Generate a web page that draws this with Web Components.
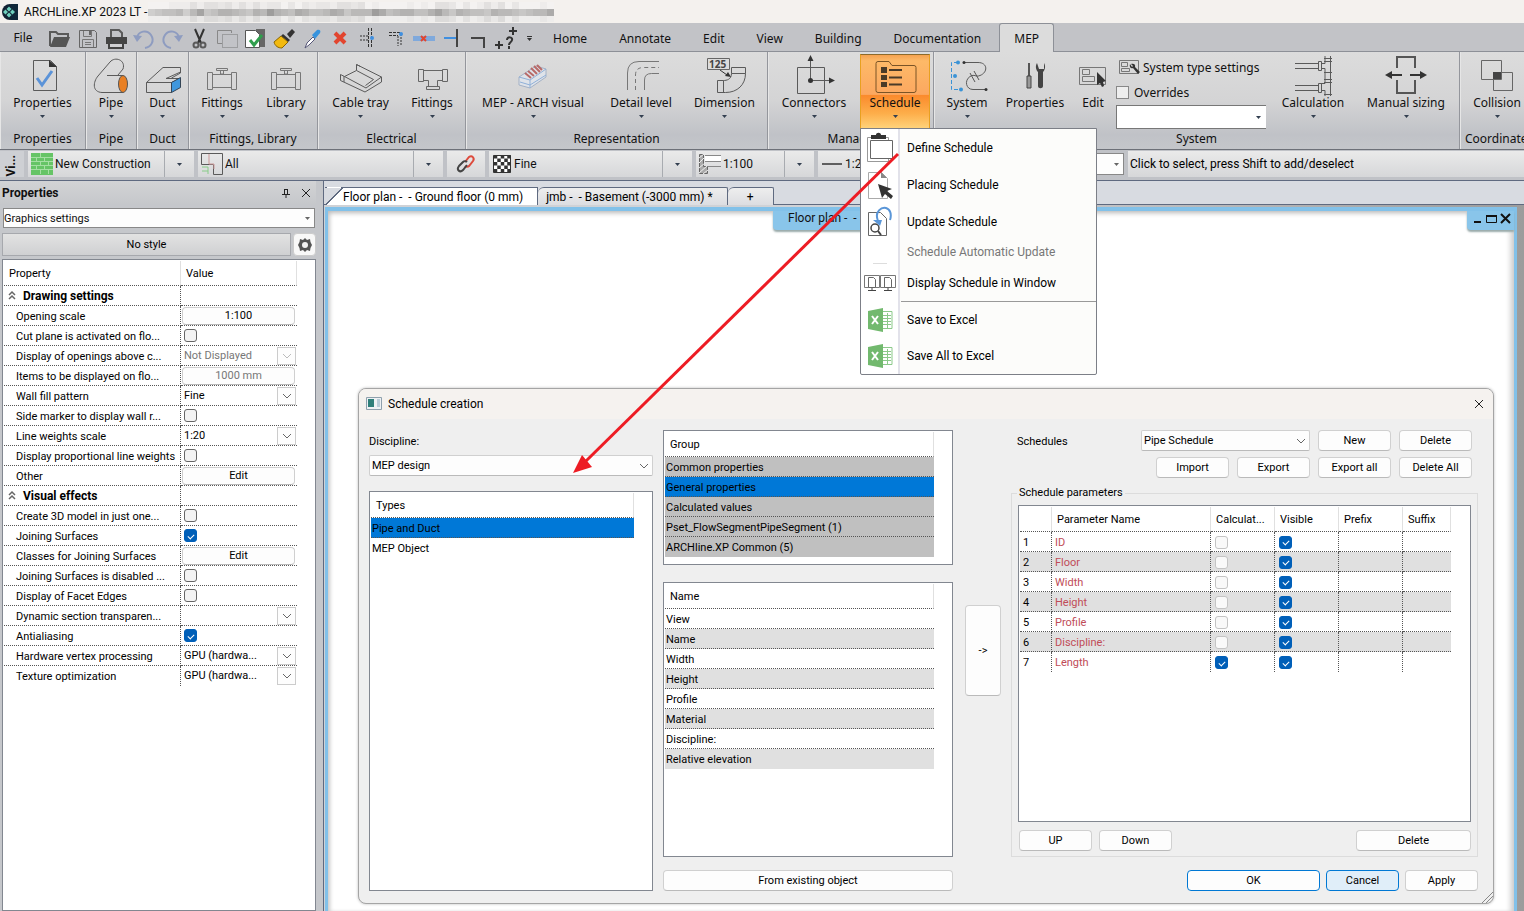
<!DOCTYPE html>
<html lang="en">
<head>
<meta charset="utf-8">
<title>ARCHLine.XP 2023 LT</title>
<style>
  html, body {
    margin: 0;
    height: 100%;
    overflow: hidden;
  }
  body {
    --line: #5f6a80;
    --face: #c5c7cb;
    --ribbon-font: "Noto Sans", "Open Sans", sans-serif;
    font: 12px/16px Roboto, "Liberation Sans", sans-serif;
    color: #111;
    background: #c5c7cb;
  }
</style>
</head>
<body>
<app-shell></app-shell>

<script>
/* Shared control styles, put in front of each component's own rules */
const controls = `
  *, *::before, *::after { box-sizing: border-box; }
  button, select, input { font: inherit; color: inherit; margin: 0; }
  .btn {
    height: 21px;
    padding: 0 4px;
    border: 1px solid #d0d0d0;
    border-bottom-color: #bababa;
    border-radius: 4px;
    background: #fdfdfd;
    color: #000;
    white-space: nowrap;
  }
  .combo { display: grid; min-width: 0; }
  .combo > * { grid-area: 1 / 1; }
  .combo select {
    appearance: none;
    width: 100%;
    height: 21px;
    padding: 0 20px 0 2px;
    border: 1px solid #d0d0d0;
    border-bottom-color: #bababa;
    border-radius: 2px;
    background: #fdfdfd;
  }
  .combo ui-icon { place-self: center end; margin-right: 4px; pointer-events: none; }
  input[type=checkbox] {
    appearance: none;
    display: grid;
    place-items: center;
    width: 13px;
    height: 13px;
    border: 1px solid #666;
    border-radius: 3px;
    background: #f3f3f3;
  }
  input[type=checkbox]:checked { background: #005fb8; border-color: #005fb8; }
  input[type=checkbox]:checked::after {
    content: "";
    width: 6px;
    height: 4px;
    border: solid #fff;
    border-width: 0 0 1px 1px;
    transform: rotate(-45deg);
  }
  input[type=checkbox]:disabled:not(:checked) { border-color: #c4c4c4; background: #f9f9f9; }
`;

const gridStyles = `
  .box {
    border: 1px solid #828790;
    background: #fff;
    padding: 1px;
    overflow: hidden;
    font-size: 11px;
  }
  table {
    border-collapse: separate;
    border-spacing: 0;
    table-layout: fixed;
    line-height: 14px;
  }
  th, td {
    padding: 2px 1px 0;
    text-align: left;
    white-space: nowrap;
    overflow: hidden;
    border-bottom: 1px dotted #555;
  }
  th {
    height: 25px;
    padding: 2px 5px 0;
    font-weight: normal;
    border-right: 1px solid #e0e0e0;
  }
  td { height: 20px; }
  tr:last-child td { border-bottom: none; }
`;

class BaseElement extends HTMLElement {
  paint(css, html) {
    this.attachShadow({ mode: "open" });
    this.shadowRoot.innerHTML = `<style>${controls}${css}</style>${html}`;
  }
}

/* ---------- icons ---------- */
const G = 'fill="none" stroke="#5a5a5a"';
const excel = `<path d="M14 3.500h10v17H14z" fill="#fff" stroke="#8cc98a"/><path d="M15 7.500h8M15 10.500h8M15 13.500h8M15 16.500h8M19.500 5v15" stroke="#8cc98a"/><path d="M0 3 15 0v24L0 21z" fill="#72b96e"/><path d="M4 8l6 8M10 8l-6 8" stroke="#fff" stroke-width="2"/>`;
const ICONS = {
  logo: [16, 16, `<circle cx="8" cy="8" r="8" fill="#123"/><path d="M9 0h7v16H9z" fill="#10283a"/><path d="M4.500 5 7 2.500l2.500 2.500L7 7.500zM1 8l2.500-2.500L6 8l-2.500 2.500zM8 8l2.500-2.500L13 8l-2.500 2.500zM4.500 11 7 8.500l2.500 2.500L7 13.500z" fill="#6fd0bd"/>`],
  open: [28, 26, `<path d="M4 20V6h6l2 2h10v3" ${G} stroke-width="2"/><path d="M4 21 8 11h16l-4 10z" fill="#555"/>`],
  save: [28, 26, `<path d="M5.500 4.500h15l2 2v15h-17z" fill="none" stroke="#666"/><path d="M9.500 5v5.500h8V5M8.500 21v-7.500h11V21M11 16.500h6M11 18.500h6" fill="none" stroke="#777"/><path d="M15 5h2v4h-2z" fill="#666"/>`],
  print: [28, 26, `<path d="M9 12V4h8l3 3v5" ${G} stroke-width="2"/><path d="M4 11h21v7H4z" fill="#444"/><path d="M7 17h14v5H7z" fill="#d0d0d3" stroke="#444" stroke-width="2"/>`],
  undo: [28, 26, `<path d="M7 12C8 5 17 3 21 9s0 12-6 13" fill="none" stroke="#8e9cc0" stroke-width="2"/><path d="M3 9l4 7 5-6z" fill="#8e9cc0"/>`],
  redo: [28, 26, `<path d="M21 12C20 5 11 3 7 9s0 12 6 13" fill="none" stroke="#8e9cc0" stroke-width="2"/><path d="M25 9l-4 7-5-6z" fill="#8e9cc0"/>`],
  cut: [28, 26, `<path d="M9 3l6 14M18 3l-6 14" stroke="#333" stroke-width="2"/><circle cx="10" cy="19" r="2.500" ${G} stroke-width="2"/><circle cx="17" cy="19" r="2.500" ${G} stroke-width="2"/>`],
  copy: [28, 26, `<path d="M8 17.500H3.500v-13h14V7" fill="none" stroke="#888"/><path d="M8.500 8.500h15v13h-15z" fill="none" stroke="#777" stroke-dasharray="1 1"/>`],
  paste: [28, 26, `<path d="M14 3h9v18h-9z" fill="#666"/><path d="M3.500 4.500h10l4 4v13h-14z" fill="#fff" stroke="#555"/><path d="M8 14l4 5 8-10" fill="none" stroke="#2f9e4d" stroke-width="3"/>`],
  brush: [28, 26, `<path d="M17 8l5-5 3 3-5 6z" fill="#333"/><path d="M13 8l7 6-2 2-7-6z" fill="#333"/><path d="M11 10l7 6-6 6c-4 0-7-2-8-6z" fill="#f2b90f" stroke="#8a6500"/>`],
  dropper: [28, 26, `<path d="M7 22l2-5 6-6 2 2-6 6z" fill="#fff" stroke="#557"/><path d="M14 9l5-5c3-1 4 1 3 3l-5 6z" fill="#3793dd"/>`],
  cross: [28, 26, `<path d="M9 7l10 10M19 7 9 17" stroke="#e2452f" stroke-width="4"/>`],
  trim: [28, 26, `<path d="M6 10h9M6 14h9" stroke="#333" stroke-dasharray="2 1"/><path d="M14.500 2v20M17.500 2v20" stroke="#333" stroke-dasharray="3 1"/><circle cx="18" cy="12" r="2" fill="#3f8fe0"/>`],
  corner: [28, 26, `<path d="M7 6.500h12M7 9.500h9" stroke="#333" stroke-dasharray="3 1"/><path d="M16 10v10M19 8v12" stroke="#333" stroke-dasharray="2 1"/><circle cx="19" cy="8" r="2" fill="#3f8fe0"/>`],
  gap: [28, 26, `<path d="M3 10h22v5H3z" fill="#7fa9dc"/><path d="M11 10l5 5M16 10l-5 5" stroke="#e2452f" stroke-width="2"/>`],
  extend: [28, 26, `<path d="M6 12h13" stroke="#3f8fe0" stroke-width="2"/><path d="M19 3v18" stroke="#444" stroke-width="2"/>`],
  angle: [28, 26, `<path d="M5 12h13v10" fill="none" stroke="#444" stroke-width="2"/>`],
  query: [28, 26, `<path d="M15 5h8M19 1v8M1 19h8M5 15v8" stroke="#333" stroke-width="2"/><path d="M13 14c0-4 6-3 5 0 0 2-3 2-3 5M15 20v3" fill="none" stroke="#333" stroke-width="2"/>`],
  more: [8, 8, `<path d="M1 1.500h5" stroke="#333"/><path d="M1 3h5L3.500 6z" fill="#333"/>`],
  arrow: [7, 5, `<path d="M1 1h5L3.500 4z" fill="#333f50"/>`],
  small: [7, 5, `<path d="M1 1h5L3.500 4z" fill="#666"/>`],
  chevron: [10, 6, `<path d="M1 1l4 4 4-4" fill="none" stroke="#666"/>`],
  faint: [10, 6, `<path d="M1 1l4 4 4-4" fill="none" stroke="#bbb"/>`],

  sheet: [44, 40, `<path d="M12.500 5.500h17l6 6v24h-23z" ${G}/><path d="M28 5v7h8z" fill="#333"/><path d="M16 23l5 7 10-14" fill="none" stroke="#5b93d8" stroke-width="3"/>`],
  pipe: [44, 40, `<path d="M34 20.500H18M34 37.500H13C3 37 4 27 9 21L21 7C26 1 37 5 34 14l-5 6" ${G}/><ellipse cx="34" cy="29" rx="4.500" ry="8.500" fill="#e98024" stroke="#555"/>`],
  duct: [44, 40, `<path d="M5.500 27.500 22 12.500h17.500V17L25 23.500h14.500L30.500 27.500zM5.500 27.500v10h25v-10M39.500 13v5l-9 5" ${G}/><path d="M30.500 27.500l9-5v10l-9 5z" fill="#3f97dd" stroke="#345"/>`],
  valve: [44, 40, `<path d="M7.500 17.500h5v17h-5zM12.500 19.500h19v13h-19zM31.500 17.500h5v17h-5zM16.500 13.500h11v2h-11zM20.500 15v4h3v-4" fill="none" stroke="#777"/>`],
  tray: [44, 40, `<path d="M1.500 19.500v6L26 37l16.500-10v-5L17.500 9.500v6M1.500 19.500l4 2L27 33l15.500-11M17.500 9.500l4 2M5.500 21.500l12-6 17 9-8 6M5 27l0-6" ${G}/>`],
  tee: [44, 40, `<path d="M8.500 14.500h5v12h-5zM32.500 14.500h5v12h-5zM13.500 15.500h19M13.500 25.500h5v6M32.500 25.500h-5v6M16.500 31.500h13v3h-13z" fill="none" stroke="#666"/>`],
  coil: [44, 40, `<path d="M8 22l17-11 10 3v8L19 33 8 30z" fill="#dfe3e9" stroke="#a3b1c6"/><path d="M8 22l11 3 16-11M19 25v8M9 27l10 3 16-10" fill="none" stroke="#8fb0d8"/><path d="M14 18l6 5M17 16l6 5M20 13l6 6M23 11l6 6M26 10l5 5" stroke="#b86a68" stroke-width="2"/>`],
  elbow: [44, 40, `<path d="M8.500 35V18Q8.500 6.500 20 6.500h20M25.500 35V25q0-6.500 7-6.500H40" fill="none" stroke="#777"/><path d="M16.500 35V20q0-7.500 8-7.500H40" fill="none" stroke="#777" stroke-dasharray="4 3"/>`],
  dimension: [44, 40, `<path d="M4.500 3.500h22v11h-22z" fill="#dcdcdc" stroke="#666"/><text x="6" y="13" font-family="Noto Sans" font-size="10" font-weight="700" fill="#444">125</text><path d="M28.500 12.500h14v6h-14zM28.500 18.500c0 6-5 7-8 7h-6v12h8c12 0 20-8 20-19M20.500 25.500v12" ${G}/><path d="M17 15l7 5" stroke="#333"/><path d="M28 22l-6-1 3-4z" fill="#333"/>`],
  connector: [44, 40, `<path d="M5.500 12.500h27v26h-27zM18.500 25V5M19 25.500h20" ${G}/><circle cx="18.500" cy="25.500" r="2.500" fill="#333"/><path d="M15.500 6l3-6 3 6zM37 22.500l6 3-6 3z" fill="#333"/>`],
  schedule: [44, 40, `<path d="M5 6.500h11l3 4h22q2 0 2 2v23q0 2-2 2H5q-2 0-2-2V8.500q0-2 2-2z" fill="none" stroke="#7a5426"/><path d="M8 12h6v6H8zM8 20h6v5H8zM8 27h6v5H8z" fill="#4a3b28"/><path d="M16 15h13M16 22.500h13M16 29.500h13" stroke="#4a3b28" stroke-width="2"/>`],
  system: [44, 40, `<path d="M13 7.500H6.500v27H16" fill="none" stroke="#3b93d6" stroke-dasharray="4 2"/><path d="M19 7.500h14c10 0 10 10 2 13-5 2-5-2-10 1-6 4-4 13 3 13h13" ${G}/><path d="M25 18l5 9M29 16l5 9" stroke="#555"/><g fill="#3b93d6"><circle cx="13" cy="7.500" r="2"/><circle cx="10" cy="21" r="2"/><circle cx="16" cy="34.500" r="2"/></g><circle cx="19" cy="7.500" r="1.500" fill="#333"/><circle cx="41" cy="34.500" r="1.500" fill="#333"/>`],
  tools: [44, 40, `<path d="M16 8v13" stroke="#555" stroke-width="2"/><path d="M14 21h4v12h-4z" fill="#999" stroke="#444"/><path d="M24 8c-2 3-1 7 1 9v14c0 3 5 3 5 0V17c2-2 3-6 1-9v6h-2l-3 0z" fill="#444"/>`],
  pick: [44, 40, `<path d="M8.500 12.500h26v17h-26zM11.500 14.500h7v5h-7zM11.500 21.500h12v5h-12z" fill="none" stroke="#777"/><path d="M26 17v13l3-2 2 4 2-1-1-4 3-1z" fill="#333"/>`],
  settings: [22, 18, `<path d="M1.500 1.500h19v13h-19zM3.500 3.500h6v4h-6zM3.500 9.500h8v3h-8z" fill="none" stroke="#777"/><path d="M12 5c-1 3 1 5 3 4l5 6 2-2-5-5c1-3-2-4-4-3l2 2-1 1z" fill="#333"/>`],
  manifold: [44, 42, `<path d="M4 8.500h23M4 13.500h23M4 30.500h23M4 35.500h23M27.500 6.500h3v9h-3zM27.500 28.500h3v9h-3zM30 8.500h4V1M30 13.500h4v15h-4M30 35.500h4V41M39.500 1v40M33 3.500h8M33 6.500h8M33 17.500h8M33 24.500h8M33 27.500h8M33 39.500h8" ${G}/>`],
  sizing: [44, 42, `<path d="M13 13V2h18v11M13 25v13h18V25" fill="none" stroke="#555" stroke-width="2"/><path d="M18 20H6M26 20h12" stroke="#333" stroke-width="2"/><path d="M1 20l7-4v8zM43 20l-7-4v8z" fill="#333"/>`],
  clash: [44, 40, `<path d="M6.500 5.500h20v19h-20zM18.500 17.500h19v18h-19z" fill="none" stroke="#666"/><path d="M18 17h8v7h-8z" fill="#444"/>`],

  brick: [22, 22, `<path d="M0 0h22v22H0z" fill="#66c466"/><path d="M0 4.500h22M0 8.500h22M0 12.500h22M0 16.500h22M5.500 4v4M13.500 4v4M9.500 8v4M17.500 8v4M5.500 12v4M13.500 12v4M9.500 0v4M9.500 16v5M17.500 16v5" stroke="#a5dfa3"/>`],
  plan: [22, 22, `<path d="M.5.5h21v21h-9v-10H.5z" ${G}/><path d="M8 1v10h5v5" fill="none" stroke="#c99"/><path d="M1 14h6v7M1 18h6" fill="none" stroke="#8c8"/>`],
  link: [20, 20, `<g fill="none" stroke-width="2"><path d="M9 8l4-5c3-2 6 1 4 4l-4 5c-1 1-3 1-4 0" stroke="#dd4a3c"/><path d="M11 11l-4 5c-3 3-7 0-4-4l4-4c1-1 3-1 4 0" stroke="#444"/></g>`],
  checker: [20, 20, `<path d="M1.500 1.500h17v17h-17z" fill="#fff" stroke="#333"/><path d="M3.500 1v18M10.500 1v18M17 1v18" stroke="#333" stroke-width="3.500" stroke-dasharray="3.500 3.500"/><path d="M7 4.500V19M14 4.500V19" stroke="#333" stroke-width="3.500" stroke-dasharray="3.500 3.500"/>`],
  wall: [22, 22, `<path d="M.5 1.500h4v12h4v7h-8z" fill="#aaa" stroke="#666"/><path d="M6 2.500h16M6 8.500h16M9 13.500h13" stroke="#888"/><path d="M6 3h16v5H6z" fill="#fff"/><path d="M0 5l5-4M0 10l5-5M0 15l6-5M0 20l8-7M4 21l5-4" stroke="#eee"/>`],
  dash: [22, 20, `<path d="M1 10h20" stroke="#333" stroke-width="1.500"/>`],

  pin: [10, 10, `<path d="M3.500 1v5M6.500 1v5M3 1.500h4M1 6.500h8M5 6v4" stroke="#222"/>`],
  close: [10, 10, `<path d="M1 1l8 8M9 1 1 9" stroke="#222"/>`],
  gear: [16, 16, `<path d="M8 1l2 2 3-1 .5 3L15 8l-1.500 3-.5 3-3-1-2 2-2-2-3 1-.5-3L1 8l1.500-3L3 2l3 1z" fill="#555"/><circle cx="8" cy="8" r="4" fill="#555"/><circle cx="8" cy="8" r="3" fill="#f3f3f3"/>`],
  fold: [8, 10, `<path d="M1 5l3-3 3 3M1 9l3-3 3 3" fill="none" stroke="#666" stroke-width="1.500"/>`],
  win: [40, 12, `<path d="M1 9h7" stroke="#111" stroke-width="2"/><path d="M13.500 2.500h10v7h-10z" fill="none" stroke="#111"/><path d="M13 3h11" stroke="#111" stroke-width="2"/><path d="M28 1l9 9M37 1l-9 9" stroke="#111" stroke-width="2"/>`],
  form: [16, 14, `<path d="M.5.5h15v12H.5z" fill="#eef1f4" stroke="#8fa0ad"/><path d="M2 2h6v8H2z" fill="#2f7f7a"/><path d="M11 2h3v8h-3z" fill="#b9ccd8"/>`],
  grip: [12, 12, `<path d="M1 12 12 1M5 12l7-7M9 12l3-3" stroke="#888"/>`],

  clipboard: [28, 32, `<path d="M1.500 5.500h21v24h-21z" fill="#fff" stroke="#999"/><path d="M4.500 8.500h22v18h-22z" fill="#fff" stroke="#666"/><path d="M5 7V3h5c0-3 5-3 5 0h5v4z" fill="#333"/>`],
  place: [28, 30, `<path d="M2.500 2.500h13l6 6v20h-19z" fill="#fff" stroke="#aaa"/><path d="M15 2v6h6z" fill="#888"/><path d="M12 14l4 14 3-4 6 5 2-3-6-5 5-2z" fill="#333"/>`],
  update: [28, 32, `<path d="M2.500 6.500h12l6 6v17h-18z" fill="#fff" stroke="#666"/><circle cx="9" cy="22" r="4" fill="#fff" stroke="#444" stroke-width="1.500"/><path d="M12 25l3 4" stroke="#444" stroke-width="2"/><path d="M12 15C8 5 16 1 20 2s6 6 4 12" fill="none" stroke="#5a96d8" stroke-width="2"/><path d="M7 14h9l-2 6z" fill="#5a96d8"/>`],
  screens: [32, 18, `<path d="M.5 1.500h15v12H.5zM16.500 1.500h15v12h-15z" fill="#fff" stroke="#777"/><path d="M4.500 3.500h5l2 2v8h-7zM20.500 3.500h5l2 2v8h-7z" fill="#fff" stroke="#666"/><path d="M4 16.500h8M20 16.500h8M8 14v2M24 14v2" stroke="#444"/>`],
  rule: [14, 24, `<path d="M0 23.500h14" stroke="#ddd"/>`],
  excel: [25, 24, excel],
};

class UiIcon extends BaseElement {
  connectedCallback() {
    if (this.shadowRoot) return;
    const [w, h, body] = ICONS[this.getAttribute("name")];
    this.paint(`:host { display: inline-flex; flex: none; }`,
      `<svg width="${w}" height="${h}" viewBox="0 0 ${w} ${h}" aria-hidden="true">${body}</svg>`);
  }
}
customElements.define("ui-icon", UiIcon);

/* ---------- title bar ---------- */
class TitleBar extends BaseElement {
  constructor() {
    super();
    // censored project path: three rows of grey tiles
    const shades = "4566747a568876587b87698667985777b96788668a7587665877656779";
    let tiles = "";
    [...shades].forEach((c, i) => {
      const v = parseInt(c, 16);
      const mid = 235 - v * 7;
      const edge = 244 - ((v * 7 + i * 5) % 4) * 6;
      tiles += `<path d="M${i * 7} 0h7v7h-7z" fill="rgb(${edge},${edge - 2},${edge - 3})"/>`;
      tiles += `<path d="M${i * 7} 7h7v7h-7z" fill="rgb(${mid},${mid - 1},${mid - 2})"/>`;
      tiles += `<path d="M${i * 7} 14h7v6h-7z" fill="rgb(${edge - 6},${edge - 7},${edge - 8})"/>`;
    });
    this.paint(`
      :host {
        display: flex;
        align-items: center;
        height: 23px;
        padding-left: 2px;
        background: #f4f1ee;
      }
      span { padding: 0 1px 0 6px; }
      `, `
      <ui-icon name="logo"></ui-icon>
      <span>ARCHLine.XP 2023 LT -</span>
      <svg width="406" height="20" shape-rendering="crispEdges">${tiles}</svg>
    `);
  }
}
customElements.define("title-bar", TitleBar);

/* ---------- ribbon ---------- */
class RibbonButton extends BaseElement {
  connectedCallback() {
    if (this.shadowRoot) return;
    const arrow = this.hasAttribute("plain") ? "" : `<ui-icon name="arrow"></ui-icon>`;
    this.paint(`
      :host { display: block; position: relative; }
      button {
        display: flex;
        flex-direction: column;
        align-items: center;
        width: 100%;
        height: 75px;
        padding: 0;
        border: 1px solid transparent;
        background: none;
        white-space: nowrap;
      }
      .pic { height: 40px; }
      .txt { line-height: 16px; margin-bottom: 3px; }
      :host([active]) button {
        border-color: #8c6a2c #e8a020 #ffb21c;
        background: linear-gradient(#f5a250, #fdb968 8%, #fca860 54%, #fb8a2c 55%, #fdae4a 80%, #ffd27a);
      }
      `, `
      <button>
        <ui-icon class="pic" name="${this.getAttribute("icon")}"></ui-icon>
        <span class="txt"><slot></slot></span>
        ${arrow}
      </button>
      <slot name="menu"></slot>
    `);
  }
}
customElements.define("ribbon-button", RibbonButton);

class RibbonGroup extends BaseElement {
  connectedCallback() {
    if (this.shadowRoot) return;
    this.paint(`
      :host {
        display: flex;
        flex-direction: column;
        flex: none;
        height: 97px;
        padding-top: 2px;
        border-right: 1px solid #94969c;
        box-shadow: inset 1px 0 #e6e6e6;
      }
      .row { display: flex; flex: none; height: 77px; }
      .name { text-align: center; line-height: 16px; white-space: nowrap; }
      :host([end]) .name { text-align: left; padding-left: 5px; }
      `, `
      <div class="row"><slot></slot></div>
      <div class="name">${this.getAttribute("label")}</div>
    `);
  }
}
customElements.define("ribbon-group", RibbonGroup);

class ScheduleMenu extends BaseElement {
  constructor() {
    super();
    const item = (icon, text, cls = "") =>
      `<button role="menuitem" class="${cls}"><span class="ico"><ui-icon name="${icon}"></ui-icon></span><span>${text}</span></button>`;
    this.paint(`
      :host {
        position: absolute;
        z-index: 5;
        top: calc(100% - 3px);
        left: 0;
        display: block;
        width: 237px;
        border: 1px solid #7c7f87;
        border-radius: 0 0 2px 2px;
        background: linear-gradient(90deg, #fff 37px, #e2e2ea 37px 39px, #fcfcfa 39px);
        font-family: Roboto, sans-serif;
      }
      button {
        display: flex;
        align-items: center;
        gap: 8px;
        width: 100%;
        height: 37px;
        padding: 0;
        border: none;
        background: none;
        color: #000;
        text-align: left;
      }
      .ico { display: flex; justify-content: center; width: 38px; }
      .low { height: 24px; color: #777; }
      .xls { height: 36px; }
      hr { margin: 0 0 0 40px; border: none; border-top: 1px solid #999; }
      `, `
      ${item("clipboard", "Define Schedule")}
      ${item("place", "Placing Schedule")}
      ${item("update", "Update Schedule")}
      ${item("rule", "Schedule Automatic Update", "low")}
      ${item("screens", "Display Schedule in Window")}
      <hr>
      ${item("excel", "Save to Excel", "xls")}
      ${item("excel", "Save All to Excel", "xls")}
    `);
  }
}

class RibbonBar extends BaseElement {
  constructor() {
    super();
    const quick = ["open", "save", "print", "undo", "redo", "cut", "copy", "paste", "brush",
      "dropper", "cross", "trim", "corner", "gap", "extend", "angle", "query"];
    const tabs = ["Home", "Annotate", "Edit", "View", "Building", "Documentation"];
    const btn = (w, icon, text, extra = "", inner = "") =>
      `<ribbon-button style="width:${w}px" icon="${icon}" ${extra}>${text}${inner}</ribbon-button>`;
    this.paint(`
      :host { display: block; font-family: var(--ribbon-font); }
      .top {
        display: flex;
        height: 29px;
        background: #c2c3c7;
        border-bottom: 1px solid #8d9097;
      }
      .top button { border: none; background: none; padding: 0; }
      .top .file { width: 46px; padding-top: 2px; }
      .quick { display: flex; align-items: center; padding-top: 3px; }
      .quick button { display: flex; justify-content: center; }
      .quick .more { width: 15px; }
      .tabs { display: flex; }
      .top .tab { height: 29px; padding: 2px 16px 0; }
      .top .tab.on {
        padding: 2px 14px 0;
        margin-left: 2px;
        border: 1px solid #8d9097;
        border-bottom: none;
        border-radius: 3px 3px 0 0;
        background: #dcdcdc;
      }
      .groups {
        display: flex;
        height: 98px;
        border-bottom: 1px solid #6d7078;
        background: linear-gradient(#dcdcdc, #d4d4d5 50%, #c0c2c7 85%, #c4c6ca);
      }
      .stack { display: flex; flex-direction: column; width: 150px; height: 75px; }
      .stack label, .stack .link { display: flex; align-items: center; gap: 5px; }
      .stack .link { height: 26px; padding: 2px 0 0 2px; border: none; background: none; gap: 3px; white-space: nowrap; }
      .stack label { height: 25px; }
      .stack input { border-radius: 0; border-color: #888; background: #eee; }
      .stack .combo select { height: 24px; border: 1px solid #777; border-right: none; border-radius: 0; background: #fff; }
      `, `
      <div class="top">
        <button class="file">File</button>
        <div class="quick">
          ${quick.map((n) => `<button aria-label="${n}"><ui-icon name="${n}"></ui-icon></button>`).join("")}
          <button class="more" aria-label="more"><ui-icon name="more"></ui-icon></button>
        </div>
        <div class="tabs">
          ${tabs.map((t) => `<button class="tab">${t}</button>`).join("")}
          <button class="tab on">MEP</button>
        </div>
      </div>
      <div class="groups">
        <ribbon-group label="Properties">${btn(85, "sheet", "Properties")}</ribbon-group>
        <ribbon-group label="Pipe">${btn(50, "pipe", "Pipe")}</ribbon-group>
        <ribbon-group label="Duct">${btn(51, "duct", "Duct")}</ribbon-group>
        <ribbon-group label="Fittings, Library">${btn(66, "valve", "Fittings")}${btn(62, "valve", "Library")}</ribbon-group>
        <ribbon-group label="Electrical">${btn(85, "tray", "Cable tray")}${btn(58, "tee", "Fittings")}<span style="width:4px"></span></ribbon-group>
        <ribbon-group label="Representation">${btn(134, "coil", "MEP - ARCH visual")}${btn(82, "elbow", "Detail level")}${btn(85, "dimension", "Dimension")}</ribbon-group>
        <ribbon-group label="Manage">${btn(92, "connector", "Connectors")}${btn(70, "schedule", "Schedule", "active",
          `<schedule-menu slot="menu"></schedule-menu>`)}<span style="width:3px"></span></ribbon-group>
        <ribbon-group label="System">
          ${btn(66, "system", "System")}${btn(70, "tools", "Properties", "plain")}${btn(46, "pick", "Edit", "plain")}
          <div class="stack">
            <button class="link"><ui-icon name="settings"></ui-icon>System type settings</button>
            <label><input type="checkbox">Overrides</label>
            <span class="combo"><select aria-label="System"><option></option></select><ui-icon name="arrow"></ui-icon></span>
          </div>
          ${btn(94, "manifold", "Calculation")}${btn(92, "sizing", "Manual sizing")}<span style="width:7px"></span>
        </ribbon-group>
        <ribbon-group label="Coordinate" end>${btn(74, "clash", "Collision")}</ribbon-group>
      </div>
    `);
  }
}
customElements.define("schedule-menu", ScheduleMenu);
customElements.define("ribbon-bar", RibbonBar);

/* ---------- option bar under the ribbon ---------- */
class OptionBar extends BaseElement {
  constructor() {
    super();
    const combo = (w, icon, text) => `
      <span class="pick" style="width:${w}px">
        <ui-icon name="${icon}"></ui-icon>
        <select aria-label="${icon}"><option>${text}</option></select>
        <span class="drop"><ui-icon name="arrow"></ui-icon></span>
      </span>`;
    this.paint(`
      :host {
        display: flex;
        gap: 4px;
        height: 31px;
        padding: 1px 0 3px;
        background: #c0c2c7;
        border-bottom: 1px solid var(--line);
      }
      .handle {
        width: 24px;
        padding: 4px 0 0 4px;
        background: #ced0d4;
        font-weight: bold;
      }
      .handle span { writing-mode: vertical-rl; transform: rotate(180deg); line-height: 14px; }
      .pick, .link, .status {
        display: flex;
        align-items: center;
        flex: none;
        border: none;
        background: linear-gradient(#eaeaea, #d6d7d9);
      }
      .pick { padding-left: 3px; }
      .pick select { appearance: none; flex: 1; min-width: 0; border: none; background: none; padding: 0 2px; }
      .drop {
        display: flex;
        align-items: center;
        justify-content: center;
        width: 30px;
        height: 100%;
        border-left: 1px solid #a8abb0;
      }
      .link { width: 38px; justify-content: center; padding: 0; }
      .combo { width: 126px; align-self: center; }
      .combo select { height: 22px; border: 1px solid #888; border-radius: 0; }
      .status { flex: 1; padding-left: 2px; white-space: nowrap; color: #000; }
      `, `
      <div class="handle"><span>Vi...</span></div>
      ${combo(166, "brick", "New Construction")}
      ${combo(245, "plan", "All")}
      <button class="link" aria-label="Link"><ui-icon name="link"></ui-icon></button>
      ${combo(203, "checker", "Fine")}
      ${combo(118, "wall", "1:100")}
      ${combo(176, "dash", "1:20")}
      <span class="combo"><select aria-label="Filter"><option></option></select><ui-icon name="small"></ui-icon></span>
      <div class="status">Click to select, press Shift to add/deselect</div>
    `);
  }
}
customElements.define("option-bar", OptionBar);

/* ---------- properties panel ---------- */
class PropertiesPanel extends BaseElement {
  constructor() {
    super();
    const rows = [
      ["Drawing settings"],
      ["Opening scale", "button", "1:100"],
      ["Cut plane is activated on flo...", "check", false],
      ["Display of openings above c...", "select", "Not Displayed", true],
      ["Items to be displayed on flo...", "button", "1000 mm", true],
      ["Wall fill pattern", "select", "Fine"],
      ["Side marker to display wall r...", "check", false],
      ["Line weights scale", "select", "1:20"],
      ["Display proportional line weights", "check", false],
      ["Other", "button", "Edit"],
      ["Visual effects"],
      ["Create 3D model in just one...", "check", false],
      ["Joining Surfaces", "check", true],
      ["Classes for Joining Surfaces", "button", "Edit"],
      ["Joining Surfaces is disabled ...", "check", false],
      ["Display of Facet Edges", "check", false],
      ["Dynamic section transparen...", "select", ""],
      ["Antialiasing", "check", true],
      ["Hardware vertex processing", "select", "GPU (hardwa..."],
      ["Texture optimization", "select", "GPU (hardwa..."],
    ];
    this.paint(`${gridStyles}
      :host {
        display: flex;
        flex-direction: column;
        flex: none;
        width: 316px;
        font-size: 11px;
        background: var(--face);
      }
      header {
        display: flex;
        align-items: center;
        gap: 10px;
        height: 23px;
        padding: 0 5px 0 2px;
        font-size: 12px;
        background: linear-gradient(#d2d3d5, #c6c8cb);
      }
      header b { flex: 1; }
      header button, .gear { display: flex; padding: 0; border: none; background: none; }
      .kind { margin: 4px 1px 5px 3px; }
      .kind select { height: 20px; padding: 1px 20px 0 0; border: 1px solid #888; border-radius: 0; }
      .style { display: flex; gap: 2px; margin: 0 0 3px 2px; }
      .style .wide {
        flex: 1;
        height: 23px;
        border: 1px solid #a6a8ad;
        background: linear-gradient(#e2e2e2, #cfd0d2);
        color: #000;
      }
      .gear {
        width: 23px;
        height: 23px;
        align-items: center;
        justify-content: center;
        border: 1px solid #ccc;
        border-radius: 4px;
        background: #f8f8f8;
      }
      .box { flex: 1; margin-left: 2px; }
      table { width: 293px; color: #000; }
      th:first-child { width: 177px; }
      td:first-child { padding-left: 12px; border-right: 1px dotted #555; }
      td.group { padding: 0 0 0 4px; font-weight: bold; font-size: 12px; }
      td.group ui-icon { margin-right: 7px; }
      td:last-child { padding: 0 1px; }
      td input { margin-left: 2px !important; }
      td .btn { display: block; width: 113px; height: 18px; }
      td .combo select { height: 18px; border: none; background: none; opacity: 1; }
      td .combo ui-icon {
        width: 19px;
        height: 18px;
        margin: 0;
        align-items: center;
        justify-content: center;
        border: 1px solid #ccc;
        background: #fdfdfd;
      }
      .off { color: #777; }
      tr:last-child td:first-child { border-bottom: none; }
      `, `
      <header><b>Properties</b>
        <button aria-label="Pin"><ui-icon name="pin"></ui-icon></button>
        <button aria-label="Close"><ui-icon name="close"></ui-icon></button>
      </header>
      <span class="combo kind"><select aria-label="Settings"><option>Graphics settings</option></select><ui-icon name="small"></ui-icon></span>
      <div class="style"><button class="wide">No style</button><button class="gear" aria-label="Style settings"><ui-icon name="gear"></ui-icon></button></div>
      <div class="box">
        <table>
          <thead><tr><th>Property</th><th>Value</th></tr></thead>
          <tbody>${rows.map((r) => this.row(...r)).join("")}</tbody>
        </table>
      </div>
    `);
  }

  row(name, type, value, off) {
    if (!type) return `<tr><td class="group"><ui-icon name="fold"></ui-icon>${name}</td><td></td></tr>`;
    const cls = off ? "off" : "";
    let field;
    if (type === "button") field = `<button class="btn ${cls}">${value}</button>`;
    if (type === "check") field = `<input type="checkbox" aria-label="${name}" ${value ? "checked" : ""}>`;
    if (type === "select") field = `<span class="combo"><select class="${cls}" aria-label="${name}"><option>${value}</option></select><ui-icon name="${off ? "faint" : "chevron"}"></ui-icon></span>`;
    return `<tr><td>${name}</td><td>${field}</td></tr>`;
  }
}
customElements.define("properties-panel", PropertiesPanel);

/* ---------- one-column list used in the dialog ---------- */
class ListGrid extends BaseElement {
  connectedCallback() {
    if (this.shadowRoot) return;
    const items = this.getAttribute("items").split("|");
    const on = this.getAttribute("selected");
    this.paint(`${gridStyles}
      :host { display: flex; flex-direction: column; min-height: 0; }
      .box { flex: 1; }
      table { width: calc(100% - 17px); color: #000; }
      :host([striped]) tr:nth-child(even) td { background: #e0e0e0; }
      :host([grey]) td { background: #c0c0c0; }
      :host tbody tr.on td.cell { background: #0078d7; }
      `, `
      <div class="box">
        <table>
          <thead><tr><th>${this.getAttribute("head")}</th></tr></thead>
          <tbody>${items.map((t) => `<tr class="${t === on ? "on" : ""}"><td class="cell">${t}</td></tr>`).join("")}</tbody>
        </table>
      </div>
    `);
  }
}
customElements.define("list-grid", ListGrid);

/* ---------- schedule dialog ---------- */
class ScheduleDialog extends BaseElement {
  constructor() {
    super();
    const params = ["ID", "Floor", "Width", "Height", "Profile", "Discipline:", "Length"];
    const row = (name, i) => `
      <tr>
        <td>${i + 1}</td>
        <td class="name">${name}</td>
        <td><input type="checkbox" aria-label="${name} calculated" ${name === "Length" ? "checked" : "disabled"}></td>
        <td><input type="checkbox" aria-label="${name} visible" checked></td>
        <td></td><td></td>
      </tr>`;
    this.paint(`${gridStyles}
      :host {
        display: flex;
        flex-direction: column;
        border: 1px solid #a5a5a5;
        border-radius: 8px;
        background: #efefef;
        box-shadow: 0 0 3px #0004;
        font-size: 11px;
        line-height: 14px;
        color: #000;
        overflow: hidden;
      }
      header {
        display: flex;
        align-items: center;
        gap: 6px;
        height: 30px;
        flex: none;
        padding: 0 9px 0 7px;
        font-size: 12px;
        background: #f5f2ef;
      }
      header span { flex: 1; }
      header button { display: flex; border: none; background: none; padding: 0; }
      .body { display: grid; grid-template-columns: 284px 300px 48px 1fr; flex: 1; min-height: 0; padding: 11px 15px 12px 10px; }
      .body > div { display: flex; flex-direction: column; min-height: 0; }
      .left label { height: 25px; padding-top: 5px; }
      .left list-grid { flex: 1; margin-top: 15px; }
      .mid { padding-left: 10px; }
      .mid list-grid:first-child { height: 135px; margin-bottom: 17px; }
      .mid list-grid:nth-child(2) { height: 275px; }
      .mid .btn { margin-top: auto; }
      .move { padding-left: 12px; justify-content: center; }
      .move .btn { height: 91px; margin-top: -20px; }
      .right { padding-left: 10px; }
      .tools { display: grid; grid-template-columns: 1fr repeat(4, 73px); gap: 6px 8px; padding: 0 6px; }
      .tools label { grid-column: 1; padding-top: 5px; }
      .tools .combo { grid-column: 2 / 4; margin-left: -15px; }
      .tools .second { grid-column: 2; }
      fieldset {
        display: flex;
        flex-direction: column;
        flex: 1;
        min-height: 0;
        margin: 8px 0 13px;
        padding: 5px 6px 5px;
        border: 1px solid #dcdcdc;
      }
      legend { padding: 0 2px; margin-left: -1px; }
      fieldset .box { flex: 1; min-height: 0; }
      .params { width: calc(100% - 18px); }
      .params th:nth-child(1) { width: 32px; }
      .params th:nth-child(3), .params th:nth-child(4), .params th:nth-child(5) { width: 64px; }
      .params th:nth-child(6) { width: 48px; }
      .params td:not(:last-child) { border-right: 1px dotted #555; }
      .params td { padding-left: 4px; }
      .params td:first-child, .params td.name { padding-left: 3px; }
      .params input { margin-bottom: 1px; }
      .params tr:nth-child(even) td { background: #e0e0e0; }
      td.name { color: #c04c58; }
      .acts, .foot { display: flex; gap: 7px; }
      .acts { margin-top: 8px; padding-left: 1px; }
      .acts .btn, .foot .btn { width: 73px; }
      .acts .btn:last-child { width: 115px; margin-left: auto; }
      .foot { justify-content: flex-end; gap: 6px; }
      .foot .btn:first-child { width: 133px; border-color: #0078d4; }
      .foot .btn:nth-child(2) { border-color: #0078d4; background: #e0eef9; }
      .grip { position: absolute; right: 0; bottom: 0; }
      `, `
      <header>
        <ui-icon name="form"></ui-icon><span>Schedule creation</span>
        <button aria-label="Close"><ui-icon name="close"></ui-icon></button>
      </header>
      <div class="body">
        <div class="left">
          <label for="discipline">Discipline:</label>
          <span class="combo"><select id="discipline"><option>MEP design</option></select><ui-icon name="chevron"></ui-icon></span>
          <list-grid head="Types" items="Pipe and Duct|MEP Object" selected="Pipe and Duct"></list-grid>
        </div>
        <div class="mid">
          <list-grid grey head="Group" selected="General properties"
            items="Common properties|General properties|Calculated values|Pset_FlowSegmentPipeSegment (1)|ARCHline.XP Common (5)"></list-grid>
          <list-grid striped head="Name"
            items="View|Name|Width|Height|Profile|Material|Discipline:|Relative elevation"></list-grid>
          <button class="btn">From existing object</button>
        </div>
        <div class="move"><button class="btn">-&gt;</button></div>
        <div class="right">
          <div class="tools">
            <label for="schedules">Schedules</label>
            <span class="combo"><select id="schedules"><option>Pipe Schedule</option></select><ui-icon name="chevron"></ui-icon></span>
            <button class="btn">New</button><button class="btn">Delete</button>
            <button class="btn second">Import</button><button class="btn">Export</button>
            <button class="btn">Export all</button><button class="btn">Delete All</button>
          </div>
          <fieldset>
            <legend>Schedule parameters</legend>
            <div class="box">
              <table class="params">
                <thead><tr><th></th><th>Parameter Name</th><th>Calculat...</th><th>Visible</th><th>Prefix</th><th>Suffix</th></tr></thead>
                <tbody>${params.map(row).join("")}</tbody>
              </table>
            </div>
            <div class="acts"><button class="btn">UP</button><button class="btn">Down</button><button class="btn">Delete</button></div>
          </fieldset>
          <div class="foot"><button class="btn">OK</button><button class="btn">Cancel</button><button class="btn">Apply</button></div>
        </div>
      </div>
      <ui-icon class="grip" name="grip"></ui-icon>
    `);
  }
}
customElements.define("schedule-dialog", ScheduleDialog);

/* ---------- drawing area ---------- */
class DrawingArea extends BaseElement {
  constructor() {
    super();
    this.paint(`
      :host {
        display: flex;
        flex-direction: column;
        flex: 1;
        min-width: 0;
        margin-left: 7px;
        border-left: 1px solid var(--line);
        background: linear-gradient(90deg, #d0d2d6 50%, #9c9c9c);
      }
      .tabs {
        display: flex;
        height: 24px;
        padding: 6px 0 0 1px;
        background: #d8dbe1;
        border-bottom: 1px solid var(--line);
      }
      .tabs button {
        height: 18px;
        padding: 0 14px 0 8px;
        border: solid var(--line);
        border-width: 1px 1px 0 0;
        border-radius: 6px 2px 0 0;
        background: linear-gradient(#eee, #dcdde1);
        line-height: 16px;
        white-space: pre;
        color: #000;
      }
      .tabs button.on {
        padding: 0 14px 0 18px;
        border-radius: 0 2px 0 0;
        background: linear-gradient(135deg, transparent 12px, var(--line) 12px 13px, #fff 13px);
        border-image: linear-gradient(90deg, transparent 17px, var(--line) 17px) 1;
      }
      .tabs .add { width: 46px; padding: 0; }
      .view {
        display: grid;
        grid-template-columns: 1fr 296px 1fr;
        align-items: start;
        position: relative;
        flex: 1;
        margin: 2px 7px 0 1px;
        border: solid #82c1e9;
        border-width: 4px 3px 0;
        background: #fff;
        box-shadow: inset 0 4px 5px -2px #bbb, inset 4px 0 4px -2px #ccc, inset -6px 0 5px -2px #d4d4d4;
      }
      .cap, .win { background: #89c5ea; box-shadow: 0 2px 2px #9aa; height: 19px; }
      .cap { grid-column: 2; padding-left: 15px; line-height: 15px; border-radius: 0 0 4px 4px; white-space: pre; }
      .win { display: flex; justify-self: end; padding: 2px 1px 0 6px; border: none; border-radius: 0 0 0 4px; }
      schedule-dialog { position: absolute; left: 30px; right: 20px; top: 177px; bottom: 7px; }
      `, `
      <div class="tabs">
        <button class="on">Floor plan -  - Ground floor (0 mm)</button>
        <button>jmb -  - Basement (-3000 mm) *</button>
        <button class="add">+</button>
      </div>
      <div class="view">
        <div class="cap">Floor plan -  -</div>
        <button class="win" aria-label="Window"><ui-icon name="win"></ui-icon></button>
        <schedule-dialog></schedule-dialog>
      </div>
    `);
  }
}
customElements.define("drawing-area", DrawingArea);

class AppShell extends BaseElement {
  constructor() {
    super();
    this.paint(`
      :host { display: flex; flex-direction: column; height: 100vh; position: relative; }
      ribbon-bar { position: relative; z-index: 2; }
      main { display: flex; flex: 1; min-height: 0; }
      .note { position: absolute; z-index: 3; left: 0; top: 0; pointer-events: none; }
      `, `
      <title-bar></title-bar>
      <ribbon-bar></ribbon-bar>
      <option-bar></option-bar>
      <main>
        <properties-panel></properties-panel>
        <drawing-area></drawing-area>
      </main>
      <svg class="note" width="1000" height="500" aria-hidden="true">
        <path d="M898 154 586 461" stroke="#ed1c24" stroke-width="3"/>
        <path d="M573 473l9-18 10 12z" fill="#ed1c24"/>
      </svg>
    `);
  }
}
customElements.define("app-shell", AppShell);
</script>
</body>
</html>
